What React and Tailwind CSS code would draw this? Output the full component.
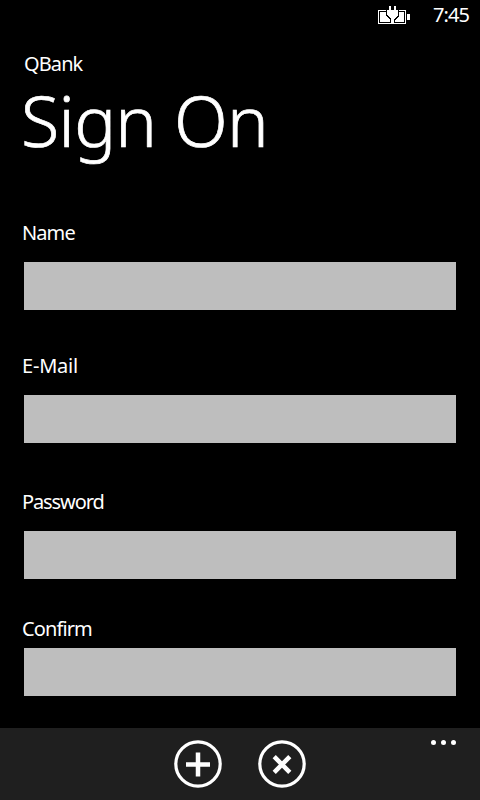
function BatteryIcon() {
  return (
    <svg width="34" height="22" viewBox="0 0 34 22" className="block" shapeRendering="crispEdges">
      <path d="M1.5 6.5H28.5V19.5H1.5Z" fill="none" stroke="#fff" />
      <path d="M3 8H27V18H3Z" fill="#fff" />
      <path d="M30 10h3v6h-3z" fill="#fff" />
      <path d="M9 4H22V12L18 16V19H13V16L9 12Z" fill="#000" />
      <path d="M12 2h2v4h3V2h2v4h2v5l-4 4v5h-3v-5l-4-4V6h2Z" fill="#fff" />
    </svg>
  );
}

function Field({ label, className, gap }) {
  return (
    <label className={`block ${className}`}>
      <span className={`block pl-[22px] text-[20px] leading-6 ${gap}`}>{label}</span>
      <input className="ml-6 block h-12 w-[432px] bg-[#bebebe] outline-none" />
    </label>
  );
}

export default function App() {
  return (
    <div className="flex h-[800px] w-[480px] flex-col overflow-hidden bg-black font-['Noto_Sans',sans-serif] tracking-[-0.9px] text-white">
      <header className="flex h-8 items-start justify-end pr-[11px]">
        <div className="mt-1 mr-[22px]">
          <BatteryIcon />
        </div>
        <span className="mt-[3px] text-[20px] leading-6">7:45</span>
      </header>
      <p className="mt-[20px] pl-6 text-[20px] leading-6">QBank</p>
      <h1 className="mt-1 pl-[21px] text-[70px] leading-[80px] font-light tracking-[-0.7px] [-webkit-text-stroke:0.7px_white]">Sign On</h1>
      <form className="flex-1">
        <Field label="Name" className="mt-[61px]" gap="mb-[17px]" />
        <Field label="E-Mail" className="mt-[44px] tracking-[-0.2px]" gap="mb-[17px]" />
        <Field label="Password" className="mt-[47px] tracking-[-1.1px]" gap="mb-[17px]" />
        <Field label="Confirm" className="mt-[38px]" gap="mb-[7px]" />
      </form>
      <footer className="relative flex h-[72px] items-center justify-center gap-9 bg-[#1f1f1f]">
        <button>
          <svg width="48" height="48" viewBox="0 0 48 48" className="block" fill="none" stroke="#fff">
            <circle cx="24" cy="24" r="22.2" strokeWidth="3.2" />
            <path d="M12 24.5h24M24 12.5v24" strokeWidth="4.5" />
          </svg>
        </button>
        <button>
          <svg width="48" height="48" viewBox="0 0 48 48" className="block" fill="none" stroke="#fff">
            <circle cx="24" cy="24" r="22.2" strokeWidth="3.2" />
            <path d="M16.2 16.7l15.6 15.6M31.8 16.7l-15.6 15.6" strokeWidth="4.5" />
          </svg>
        </button>
        <div className="absolute top-3 right-6 flex gap-[5px]">
          <i className="size-[5px] rounded-full bg-white" />
          <i className="size-[5px] rounded-full bg-white" />
          <i className="size-[5px] rounded-full bg-white" />
        </div>
      </footer>
    </div>
  );
}
